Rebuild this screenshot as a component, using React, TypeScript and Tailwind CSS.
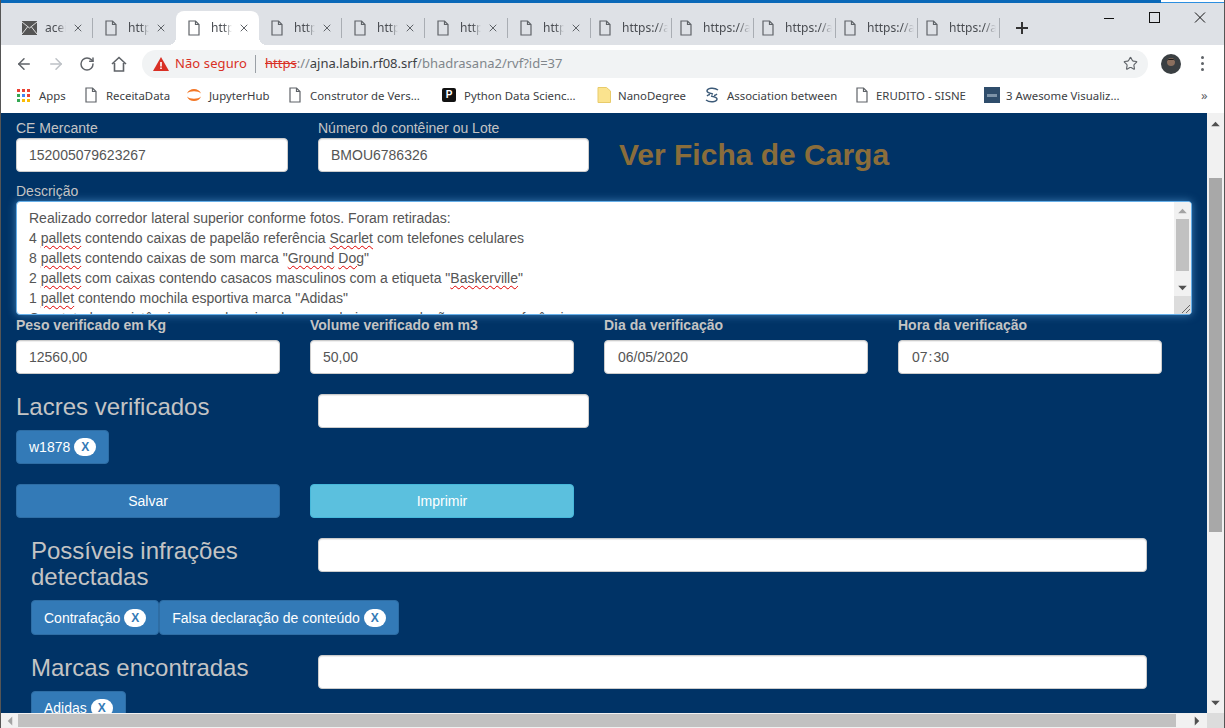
import type { ReactNode } from "react";
import { ArrowLeft, ArrowRight, RotateCw, Star, X } from "lucide-react";

const UI_FONT = "font-['Noto_Sans','Open_Sans',sans-serif]";

function DocIcon({ className = "" }: { className?: string }) {
  return (
    <svg viewBox="0 0 12 16" className={`h-4 w-3 shrink-0 ${className}`} fill="none" stroke="#5f6368" strokeWidth="1.2">
      <path d="M1 1h6.500L11 4.500V15H1z" />
      <path d="M7.500 1v3.500H11" />
    </svg>
  );
}

function MailIcon() {
  return (
    <svg viewBox="0 0 15 14" className="h-[14px] w-[15px] shrink-0">
      <rect x="0" y="0" width="15" height="14" fill="#555" />
      <path d="M0 1l7.500 6L15 1M0 13l5.500-7M15 13L9.500 6" fill="none" stroke="#ddd" strokeWidth="1" />
    </svg>
  );
}

const tabs = [
  { title: "aceita", mail: true, close: true },
  { title: "https://ajna", close: true, hideSep: true },
  { title: "https://ajna", close: true, active: true },
  { title: "https://ajna", close: true },
  { title: "https://ajna", close: true },
  { title: "https://ajna", close: true },
  { title: "https://ajna", close: true },
  { title: "https://ajna", narrow: true },
  { title: "https://ajna" },
  { title: "https://ajna" },
  { title: "https://ajna" },
  { title: "https://ajna" },
];

type TabProps = {
  title: string;
  mail?: boolean;
  close?: boolean;
  active?: boolean;
  hideSep?: boolean;
  narrow?: boolean;
};

function Tab({ title, mail, close, active, hideSep, narrow }: TabProps) {
  return (
    <div className={`relative flex h-[34px] shrink-0 items-center ${close ? "w-[83px]" : narrow ? "w-[81px]" : "w-[82px]"}`}>
      <div
        className={`flex h-full w-full items-center ${close ? "pl-3 pr-[9px]" : "pl-2 pr-1"} ${
          active
            ? "rounded-t-lg bg-white before:absolute before:bottom-0 before:-left-2 before:h-2 before:w-2 before:bg-[radial-gradient(circle_at_0_0,transparent_8px,white_8px)] after:absolute after:bottom-0 after:-right-2 after:h-2 after:w-2 after:bg-[radial-gradient(circle_at_100%_0,transparent_8px,white_8px)]"
            : ""
        }`}
      >
        <div className="flex w-[23px] shrink-0 items-center">{mail ? <MailIcon /> : <DocIcon />}</div>
        <span
          className={`min-w-0 flex-1 overflow-hidden whitespace-nowrap text-[12px] text-[#4a4d52] ${
            close
              ? "[mask-image:linear-gradient(90deg,#000_60%,transparent)]"
              : "[mask-image:linear-gradient(90deg,#000_75%,transparent)]"
          }`}
        >
          {title}
        </span>
        {close ? <X size={12} strokeWidth={2} className="ml-[6px] shrink-0 text-[#5f6368]" /> : null}
      </div>
      {!active && !hideSep ? <div className="absolute right-0 top-[7px] h-5 w-px bg-[#a9adb3]" /> : null}
    </div>
  );
}

function AppsIcon() {
  const colors = ["#ea4335", "#ea4335", "#ea4335", "#34a853", "#4285f4", "#ea4335", "#34a853", "#fbbc05", "#fbbc05"];
  return (
    <div className="grid h-[13px] w-[13px] shrink-0 grid-cols-3 gap-[2px]">
      {colors.map((c, i) => (
        <div key={i} style={{ backgroundColor: c }} />
      ))}
    </div>
  );
}

function JupyterIcon() {
  return (
    <svg viewBox="0 0 16 16" className="h-4 w-4 shrink-0" fill="#f37726">
      <path d="M1 6.500C3 .5 13 .5 15 6.500 12 3.500 4 3.500 1 6.500z" />
      <path d="M1 9.500C3 15.500 13 15.500 15 9.500 12 12.500 4 12.500 1 9.500z" />
    </svg>
  );
}

function PythonIcon() {
  return (
    <div className="flex h-[14px] w-[14px] shrink-0 items-center justify-center rounded-[2px] bg-[#111] font-['Liberation_Sans',sans-serif] text-[10px] font-bold leading-none text-white">
      P
    </div>
  );
}

function NoteIcon() {
  return (
    <svg viewBox="0 0 14 16" className="h-4 w-[14px] shrink-0">
      <path d="M1 .5h8.500L13.500 4v11.500H1z" fill="#fbe38e" stroke="#e8cb6a" />
    </svg>
  );
}

function AssocIcon() {
  return (
    <svg viewBox="0 0 16 16" className="h-4 w-4 shrink-0" fill="none" stroke="#3c5a78" strokeWidth="1.500">
      <path d="M14 3C10 0 3 1 3 4c0 2 4 2.500 6 3" />
      <path d="M2 13c4 3 11 2 11-1 0-2-4-2.500-6-3" />
      <path d="M3 9c1-1 2-1.500 3-1.500M13 7c-1 1-2 1.500-3 1.500" />
    </svg>
  );
}

function ThumbIcon() {
  return (
    <div className="flex h-4 w-4 shrink-0 items-center bg-[#2f4d6b]">
      <div className="mx-[3px] h-[3px] w-full bg-[#7d93a8]" />
    </div>
  );
}

const bookmarks = [
  { label: "Apps", icon: <AppsIcon />, w: "w-[68px]", gap: "gap-[9px]" },
  { label: "ReceitaData", icon: <DocIcon />, w: "w-[101px]", gap: "gap-[9px]" },
  { label: "JupyterHub", icon: <JupyterIcon />, w: "w-[103px]", gap: "gap-[7px]" },
  { label: "Construtor de Vers...", icon: <DocIcon />, w: "w-[153px]", gap: "gap-[9px]" },
  { label: "Python Data Scienc...", icon: <PythonIcon />, w: "w-[155px]", gap: "gap-2" },
  { label: "NanoDegree", icon: <NoteIcon />, w: "w-[107px]", gap: "gap-[7px]" },
  { label: "Association between", icon: <AssocIcon />, w: "w-[152px]", gap: "gap-[7px]" },
  { label: "ERUDITO - SISNE", icon: <DocIcon />, w: "w-[128px]", gap: "gap-2" },
  { label: "3 Awesome Visualiz...", icon: <ThumbIcon />, w: "w-[200px]", gap: "gap-[6px]" },
];

function BrowserChrome() {
  return (
    <div className={`shrink-0 ${UI_FONT}`}>
      <div className="flex h-[3px]">
        <div className="w-[1160px] bg-[#0a68b8]" />
        <div className="flex-1 border-b border-[#2b8ee0] bg-white" />
      </div>
      <div className="flex h-[42px] items-end bg-[#dee1e6] pl-[9px]">
        {tabs.map((t, i) => (
          <Tab key={i} {...t} />
        ))}
        <svg viewBox="0 0 14 14" className="mb-[10px] ml-[15px] h-[14px] w-[14px]" stroke="#333" strokeWidth="2">
          <path d="M7 1v12M1 7h12" />
        </svg>
        <div className="flex h-full flex-1 items-start justify-end pt-[9px]">
          <svg viewBox="0 0 104 12" className="mr-[18px] h-3 w-[104px]" fill="none" stroke="#111" strokeWidth="1">
            <path d="M2 6.500h10" />
            <rect x="47.500" y=".5" width="10" height="10" />
            <path d="M93 .5l10 10M103 .5l-10 10" />
          </svg>
        </div>
      </div>
      <div className="flex h-[37px] items-center bg-white">
        <div className="flex w-[141px] shrink-0 items-center pl-[14px] text-[#5f6368]">
          <ArrowLeft size={18} strokeWidth={2} />
          <ArrowRight size={18} strokeWidth={2} className="ml-[14px] text-[#bdc1c6]" />
          <RotateCw size={16} strokeWidth={2.2} className="ml-[14px]" />
          <svg viewBox="0 0 16 16" className="ml-4 h-4 w-4" fill="none" stroke="#5f6368" strokeWidth="1.600">
            <path d="M1 8l7-6.500L15 8M3.500 7v8h9V7" />
          </svg>
        </div>
        <div className="flex h-7 w-[1006px] shrink-0 items-center rounded-full bg-[#f1f3f4] pl-[11px] pr-[10px]">
          <svg viewBox="0 0 16 14" className="h-[14px] w-4 shrink-0">
            <path d="M8 0l8 14H0z" fill="#d93025" />
            <path d="M7.200 5h1.600v4.500H7.200zM7.200 10.500h1.600V12H7.200z" fill="#fff" />
          </svg>
          <span className="ml-[6px] w-[72px] whitespace-nowrap text-[13px] tracking-[0.1px] text-[#d93025]">Não seguro</span>
          <div className="ml-[8px] h-[18px] w-px bg-[#9aa0a6]" />
          <span className="ml-[9px] whitespace-nowrap text-[13px]">
            <span className="text-[#d93025] line-through">https</span>
            <span className="text-[#80868b]">://</span>
            <span className="text-[#3c4043]">ajna.labin.rf08.srf</span>
            <span className="text-[#80868b]">/bhadrasana2/rvf?id=37</span>
          </span>
          <Star size={15} strokeWidth={1.800} className="ml-auto text-[#5f6368]" />
        </div>
        <svg viewBox="0 0 20 20" className="ml-[13px] h-5 w-5 shrink-0">
          <circle cx="10" cy="10" r="10" fill="#3a3f42" />
          <circle cx="10" cy="8" r="4" fill="#8b6f5e" />
          <path d="M6 7c0-3 8-3 8 0l-1-1H7z" fill="#1a1a1a" />
        </svg>
        <div className="ml-5 flex flex-col gap-[3px]">
          <div className="h-[3px] w-[3px] rounded-full bg-[#5f6368]" />
          <div className="h-[3px] w-[3px] rounded-full bg-[#5f6368]" />
          <div className="h-[3px] w-[3px] rounded-full bg-[#5f6368]" />
        </div>
      </div>
      <div className="flex h-[31px] items-center bg-white pb-1 pl-4 text-[11.4px] text-[#3c4043]">
        {bookmarks.map((b) => (
          <div key={b.label} className={`flex shrink-0 items-center ${b.w} ${b.gap}`}>
            {b.icon}
            <span className="whitespace-nowrap">{b.label}</span>
          </div>
        ))}
        <span className="ml-[17px] text-[13px] leading-none text-[#5f6368]">»</span>
      </div>
    </div>
  );
}

function Field({ value = "", className = "" }: { value?: ReactNode; className?: string }) {
  return (
    <div
      className={`flex h-[34px] shrink-0 items-center rounded border border-[#ccc] bg-white px-3 text-[14px] text-[#555] shadow-[inset_0_1px_1px_rgba(0,0,0,0.075)] ${className}`}
    >
      {value}
    </div>
  );
}

function Chip({ label, className = "" }: { label: string; className?: string }) {
  return (
    <div
      className={`flex h-[34px] shrink-0 items-center rounded border border-[#2e6da4] bg-[#337ab7] px-3 text-[14px] text-white ${className}`}
    >
      {label}
      <span className="ml-1 flex h-[18px] w-[22px] items-center justify-center rounded-full bg-white text-[12px] font-bold text-[#337ab7]">
        X
      </span>
    </div>
  );
}

function Sq({ children }: { children: string }) {
  return <span className="underline decoration-[#e00000] decoration-wavy decoration-1 underline-offset-2">{children}</span>;
}

function Arrow({ dir, color }: { dir: "up" | "down" | "left" | "right"; color: string }) {
  const d = {
    up: "M0 6L5 1l5 5z",
    down: "M0 1h10L5 6z",
    left: "M7 0v10L2 5z",
    right: "M2 0v10l5-5z",
  }[dir];
  return (
    <svg viewBox={dir === "up" || dir === "down" ? "0 0 10 7" : "0 0 9 10"} className={dir === "up" || dir === "down" ? "h-[6px] w-[9px]" : "h-[10px] w-[8px]"}>
      <path d={d} fill={color} />
    </svg>
  );
}

function DescriptionBox() {
  return (
    <div className="flex h-[114px] w-[1176px] overflow-hidden rounded border border-[#66afe9] bg-white text-[14px] text-[#555] shadow-[0_0_8px_rgba(102,175,233,0.6)]">
      <div className="flex-1 overflow-hidden px-3 pt-[6px] leading-[20px]">
        <div className="whitespace-nowrap">Realizado corredor lateral superior conforme fotos. Foram retiradas:</div>
        <div className="whitespace-nowrap">
          4 <Sq>pallets</Sq> contendo caixas de papelão referência <Sq>Scarlet</Sq> com telefones celulares
        </div>
        <div className="whitespace-nowrap">
          8 <Sq>pallets</Sq> contendo caixas de som marca "<Sq>Ground</Sq> <Sq>Dog</Sq>"
        </div>
        <div className="whitespace-nowrap">
          2 <Sq>pallets</Sq> com caixas contendo casacos masculinos com a etiqueta "<Sq>Baskerville</Sq>"
        </div>
        <div className="whitespace-nowrap">
          1 <Sq>pallet</Sq> contendo mochila esportiva marca "Adidas"
        </div>
        <div className="whitespace-nowrap">Constatada a existência em cada caixa de mercadorias sem relação com a conferência</div>
      </div>
      <div className="flex w-[17px] shrink-0 flex-col bg-[#f1f1f1]">
        <div className="flex h-[17px] items-center justify-center">
          <Arrow dir="up" color="#a3a3a3" />
        </div>
        <div className="mx-[2px] h-[52px] bg-[#c1c1c1]" />
        <div className="flex-1" />
        <div className="flex h-[17px] items-center justify-center">
          <Arrow dir="down" color="#505050" />
        </div>
        <div className="flex h-[18px] items-end justify-end bg-[#dcdcdc]">
          <svg viewBox="0 0 10 10" className="h-[10px] w-[10px]" stroke="#666" strokeWidth="1">
            <path d="M1 9l8-8M5 9l4-4" />
          </svg>
        </div>
      </div>
    </div>
  );
}

function FormPage() {
  return (
    <div className="min-w-0 flex-1 overflow-hidden bg-[#003366] pl-[15px] pt-[5px] font-['Liberation_Sans',sans-serif] text-[14px] leading-[20px] text-[#c4c4c4]">
      <div className="flex gap-[30px]">
        <div className="w-[272px]">
          <div>CE Mercante</div>
          <Field value="152005079623267" />
        </div>
        <div className="w-[271px]">
          <div>Número do contêiner ou Lote</div>
          <Field value="BMOU6786326" />
        </div>
        <div className="h-[54px] pt-[19px] text-[30px] font-bold leading-[35px] text-[#8a6d3b]">Ver Ficha de Carga</div>
      </div>
      <div className="mt-[9px]">Descrição</div>
      <DescriptionBox />
      <div className="flex gap-[30px] font-bold">
        <div className="w-[264px]">
          <div className="mb-[5px]">Peso verificado em Kg</div>
          <Field value="12560,00" className="font-normal" />
        </div>
        <div className="w-[264px]">
          <div className="mb-[5px]">Volume verificado em m3</div>
          <Field value="50,00" className="font-normal" />
        </div>
        <div className="w-[264px]">
          <div className="mb-[5px]">Dia da verificação</div>
          <Field value="06/05/2020" className="pl-[13px] font-normal" />
        </div>
        <div className="w-[264px]">
          <div className="mb-[5px]">Hora da verificação</div>
          <Field
            value={
              <>
                07<span className="mx-[1px]">:</span>30
              </>
            }
            className="pl-[13px] font-normal"
          />
        </div>
      </div>
      <div className="mt-5 flex">
        <div className="w-[302px] shrink-0">
          <div className="h-[36px] text-[24px] leading-[26px]">Lacres verificados</div>
          <Chip label="w1878" className="w-[93px]" />
        </div>
        <Field className="w-[271px]" />
      </div>
      <div className="mt-5 flex gap-[30px] text-white">
        <div className="flex h-[34px] w-[264px] items-center justify-center rounded border border-[#2e6da4] bg-[#337ab7]">Salvar</div>
        <div className="flex h-[34px] w-[264px] items-center justify-center rounded border border-[#46b8da] bg-[#5bc0de]">Imprimir</div>
      </div>
      <div className="ml-[15px] mt-5">
        <div className="flex">
          <div className="w-[287px] shrink-0 text-[24px] leading-[26px]">Possíveis infrações detectadas</div>
          <Field className="w-[829px]" />
        </div>
        <div className="mt-[10px] flex">
          <Chip label="Contrafação" className="h-[35px]" />
          <Chip label="Falsa declaração de conteúdo" className="h-[35px]" />
        </div>
        <div className="mt-5 flex">
          <div className="w-[287px] shrink-0 text-[24px] leading-[26px]">Marcas encontradas</div>
          <Field className="w-[829px]" />
        </div>
        <div className="mt-[2px] flex">
          <Chip label="Adidas" />
        </div>
      </div>
    </div>
  );
}

export default function App() {
  return (
    <div className="flex h-[728px] w-[1225px] flex-col overflow-hidden border-x border-[#555] bg-white">
      <BrowserChrome />
      <div className="flex min-h-0 flex-1">
        <FormPage />
        <div className="flex w-[17px] shrink-0 flex-col bg-[#f1f1f1]">
          <div className="flex h-[21px] items-center justify-center">
            <Arrow dir="up" color="#505050" />
          </div>
          <div className="mx-[2px] mt-[44px] h-[354px] bg-[#a8a8a8]" />
          <div className="flex-1" />
          <div className="flex h-[21px] items-center justify-center">
            <Arrow dir="down" color="#505050" />
          </div>
        </div>
      </div>
      <div className="flex h-[15px] shrink-0 bg-[#f1f1f1]">
        <div className="flex w-[17px] shrink-0 items-center justify-center">
          <Arrow dir="left" color="#a3a3a3" />
        </div>
        <div className="my-[1px] w-[1158px] bg-[#c1c1c1]" />
        <div className="flex flex-1 items-center justify-end pr-[6px]">
          <Arrow dir="right" color="#505050" />
        </div>
        <div className="w-[17px] shrink-0 bg-[#dcdcdc]" />
      </div>
    </div>
  );
}
